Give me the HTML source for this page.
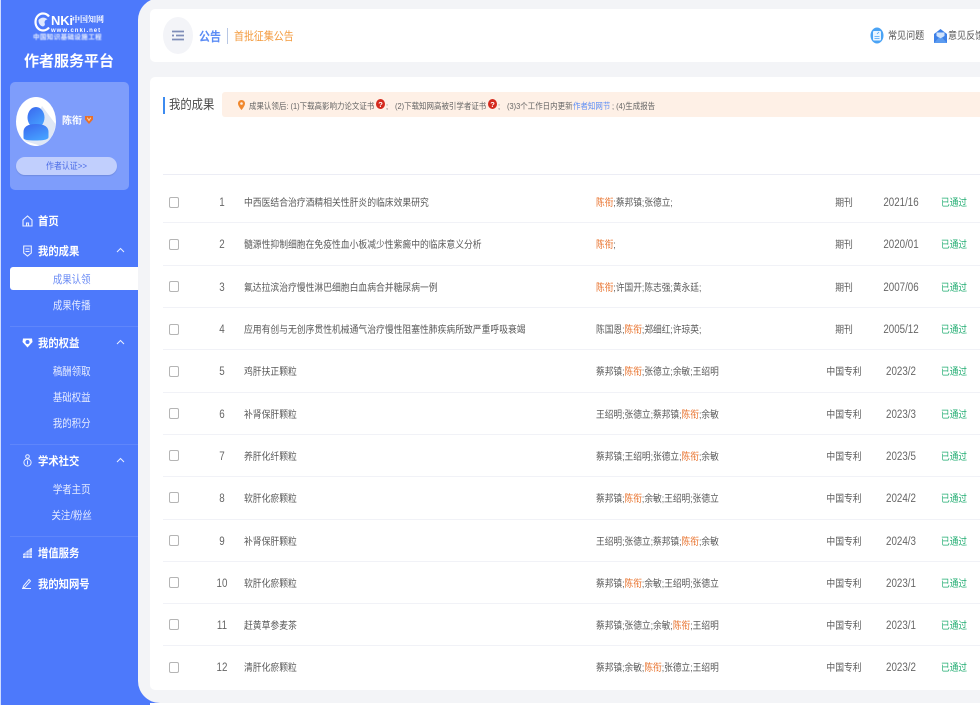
<!DOCTYPE html>
<html lang="zh"><head><meta charset="utf-8">
<style>
html,body{margin:0;padding:0;background:#fff}
#p{position:relative;width:980px;height:705px;overflow:hidden;background:#4d79fb;font-family:"Liberation Sans","Noto Sans CJK SC",sans-serif;color:#666}
#p div{position:absolute;white-space:nowrap}
.t{filter:blur(.3px)}
.m{left:38px;margin-top:1px;font-size:11.6px;line-height:14px;font-weight:700;color:#fff;transform:scaleX(.89);transform-origin:left center;filter:blur(.25px)}
.s{width:138px;left:0;margin-top:1px;text-align:center;font-size:10.6px;line-height:14px;padding-left:6px;box-sizing:border-box;color:#e6ecff;transform:scaleX(.89);filter:blur(.25px)}
.hr{left:10px;width:128px;height:1px;background:#5f86fb}
.cb{left:169px;width:8px;height:9px;border:1px solid #b5b5b5;border-radius:2px;background:#fff}
.n{left:202px;width:40px;text-align:center;font-size:11.5px;line-height:14px;color:#666;transform:scaleX(.85)}
.ti,.au,.ty,.st{font-size:10px;line-height:14px;color:#5a5a5a;margin-top:1px}
.ti{left:244px;transform:scaleX(.88);transform-origin:left center}
.au{left:596px;transform:scaleX(.87);transform-origin:left center}
.ty{left:814px;width:60px;text-align:center;transform:scaleX(.88)}
.yr{left:871px;width:60px;text-align:center;font-size:11.5px;line-height:14px;color:#666;transform:scaleX(.85)}
.st{left:941px;color:#22ad72;transform:scaleX(.87);transform-origin:left center}
.au b{font-weight:400;color:#e8702a}
.sep{left:163px;width:817px;height:1px;background:#f1f2f7}
.nt{top:98.500px;font-size:8.3px;line-height:14px;color:#666;transform:scaleX(.9);transform-origin:left center;filter:blur(.3px)}
</style></head><body>
<div id="p">
<div style="left:0;top:0;width:1px;height:705px;background:#cfdcff"></div>
<!-- main -->
<div style="left:138px;top:-2px;width:860px;height:705px;background:#f3f4f7;border-radius:22px 0 0 22px"></div>
<div style="left:150px;top:703px;width:830px;height:2px;background:#fff"></div>
<div style="left:150px;top:9px;width:830px;height:53px;background:#fff;border-radius:5px 0 0 5px"></div>
<div style="left:150px;top:77px;width:830px;height:613px;background:#fff;border-radius:5px 0 0 5px"></div>

<!-- logo -->
<svg style="position:absolute;left:34px;top:12px" width="18" height="20" viewBox="0 0 18 20"><path d="M15 4.500C13.500 2.500 11.500 1.500 9 1.500 4.800 1.500 1.500 5.300 1.500 10s3.300 8.500 7.500 8.500c2.500 0 4.500-1 6-3" fill="none" stroke="#fff" stroke-width="2.200"/><path d="M4.500 8c2.500-3 6.500-3 9-.5-2 .2-3 1.200-3 3.500 1 1.500 0 3-1.500 3.500C6 14 4.300 11 4.500 8z" fill="#dfe8ff"/></svg>
<div style="left:51px;top:13px;font-size:13px;line-height:15px;font-weight:700;color:#fff;letter-spacing:-.2px;filter:blur(.3px)">NKi</div>
<div style="left:72px;top:14px;font-size:8px;line-height:12px;color:#fff;font-weight:700;font-family:'Liberation Serif','Noto Serif CJK SC',serif;filter:blur(.3px)">中国知网</div>
<div style="left:51px;top:27px;font-size:6px;line-height:8px;color:#fff;font-weight:700;letter-spacing:1px;filter:blur(.3px)">www.cnki.net</div>
<div style="left:33px;top:34px;font-size:6.500px;line-height:8px;color:#eaf0ff;font-weight:700;letter-spacing:.4px;filter:blur(.4px)">中国知识基础设施工程</div>
<div style="left:24px;top:52px;font-size:15px;line-height:20px;font-weight:700;color:#fff;filter:blur(.2px)">作者服务平台</div>

<!-- profile card -->
<div style="left:10px;top:82px;width:119px;height:108px;background:#7e9dfb;border-radius:5px"></div>
<svg style="position:absolute;left:15px;top:97px" width="42" height="49" viewBox="0 0 42 49"><defs><linearGradient id="g" x1="0" y1="0" x2=".6" y2="1"><stop offset="0" stop-color="#3a67ee"/><stop offset="1" stop-color="#46a0ff"/></linearGradient></defs><ellipse cx="21" cy="24.500" rx="20" ry="24.500" fill="#fff"/><path d="M27 9L40.500 27c-1 12-8 20-16 21.500L10 44z" fill="#dfe7f5"/><ellipse cx="21" cy="20.500" rx="8.500" ry="10.500" fill="url(#g)"/><path d="M8.500 41v-6c0-5 4-8 12.500-8S33.500 30 33.500 35v5c0 2-3 3.500-12.500 3.500-8 0-12.500-.5-12.500-2.500z" fill="url(#g)"/></svg>
<div style="left:62px;top:115px;font-size:10px;line-height:14px;font-weight:700;color:#fff;filter:blur(.2px)">陈衔</div>
<svg style="position:absolute;left:85px;top:115px" width="8" height="9" viewBox="0 0 9 10"><path d="M0 1h9v4L4.500 10 0 5z" fill="#e8702a"/><path d="M2.500 3l2 3 2-3" fill="none" stroke="#f8d0a8" stroke-width="1.200"/></svg>
<div style="left:16px;top:157px;width:101px;height:18px;background:#c1cffd;border-radius:9px;box-shadow:0 1px 1px #6f8be0"></div>
<div style="left:16px;top:159px;width:101px;text-align:center;font-size:9px;line-height:14px;color:#4a6be6;transform:scaleX(.88);filter:blur(.2px)">作者认证&gt;&gt;</div>

<!-- menu -->
<svg style="position:absolute;left:22px;top:215px" width="11" height="12" viewBox="0 0 11 12" fill="none" stroke="#eaf0ff" stroke-width="1.100"><path d="M5.500 1L1 5v6h9V5zM4.500 11V8h2v3"/></svg>
<div class="m" style="top:214px">首页</div>
<svg style="position:absolute;left:23px;top:245px" width="9" height="12" viewBox="0 0 9 12" fill="none" stroke="#eaf0ff" stroke-width="1.100"><path d="M.7 1h7.600v7L4.500 11 .7 8z"/><path d="M2.500 4h4M2.500 6.500h4"/></svg>
<div class="m" style="top:244px">我的成果</div>
<svg style="position:absolute;left:116px;top:247px" width="9" height="6" viewBox="0 0 9 6" fill="none" stroke="#eaf0ff" stroke-width="1"><path d="M1 5l3.500-3.500L8 5"/></svg>
<div style="left:10px;top:267px;width:128px;height:23px;background:#fff;border-radius:3px 0 0 3px"></div>
<div class="s" style="top:272px;color:#6b8cf5">成果认领</div>
<div class="s" style="top:298px">成果传播</div>
<div class="hr" style="top:326px"></div>
<svg style="position:absolute;left:22px;top:337px" width="11" height="11" viewBox="0 0 11 11"><path d="M1 1.500h9l.5 3.500-5 5.500-5-5.500z" fill="#fff"/><circle cx="5.500" cy="5" r="2" fill="#4d79fb"/></svg>
<div class="m" style="top:336px">我的权益</div>
<svg style="position:absolute;left:116px;top:339px" width="9" height="6" viewBox="0 0 9 6" fill="none" stroke="#eaf0ff" stroke-width="1"><path d="M1 5l3.500-3.500L8 5"/></svg>
<div class="s" style="top:364px">稿酬领取</div>
<div class="s" style="top:390px">基础权益</div>
<div class="s" style="top:416px">我的积分</div>
<div class="hr" style="top:444px"></div>
<svg style="position:absolute;left:23px;top:454px" width="9" height="13" viewBox="0 0 9 13" fill="none" stroke="#eaf0ff" stroke-width="1"><circle cx="4.500" cy="2.500" r="1.800"/><circle cx="4.500" cy="8.500" r="3.600"/><path d="M4.500 6.500v4"/></svg>
<div class="m" style="top:454px">学术社交</div>
<svg style="position:absolute;left:116px;top:457px" width="9" height="6" viewBox="0 0 9 6" fill="none" stroke="#eaf0ff" stroke-width="1"><path d="M1 5l3.500-3.500L8 5"/></svg>
<div class="s" style="top:482px">学者主页</div>
<div class="s" style="top:508px">关注/粉丝</div>
<div class="hr" style="top:536px"></div>
<svg style="position:absolute;left:23px;top:547px" width="9" height="12" viewBox="0 0 9 12"><path d="M0 7l8-6h1v10H0z" fill="#d5dfff"/><path d="M0 8.500h9M0 6h9M3 4v7M6 2v9" stroke="#4d79fb" stroke-width=".5"/></svg>
<div class="m" style="top:546px">增值服务</div>
<svg style="position:absolute;left:22px;top:578px" width="10" height="11" viewBox="0 0 10 11" fill="none" stroke="#eaf0ff" stroke-width="1"><path d="M1.500 8L7 1.500l1.500 1.500L3 9.300 1 9.700zM0 10.500h9"/></svg>
<div class="m" style="top:577px">我的知网号</div>

<!-- top bar -->
<div style="left:163px;top:17px;width:30px;height:37px;background:#f3f4f8;border-radius:50%"></div>
<svg style="position:absolute;left:172px;top:30px" width="12" height="11" viewBox="0 0 12 11" fill="none" stroke="#7f8db8" stroke-width="1.800"><path d="M0 1.500h12M4 5.500h8M0 9.500h12"/><path d="M0 5.500h2"/></svg>
<div class="t" style="left:199px;top:29px;font-size:12.500px;line-height:16px;font-weight:700;color:#5b8cf5;transform:scaleX(.88);transform-origin:left center">公告</div>
<div style="left:227px;top:28px;width:1px;height:16px;background:#b8c7e4"></div>
<div class="t" style="left:234px;top:30px;font-size:11.300px;line-height:14px;color:#f39a3c;transform:scaleX(.88);transform-origin:left center">首批征集公告</div>
<svg style="position:absolute;left:870px;top:27px" width="14" height="17" viewBox="0 0 14 17"><ellipse cx="7" cy="8.500" rx="6.500" ry="8" fill="#4aa3f5"/><rect x="3" y="4" width="8" height="9.500" rx="1" fill="#eaf5ff"/><path d="M4.500 9.500h5M4.500 11.500h5M7 7l2-2" stroke="#4aa3f5" stroke-width=".8"/></svg>
<div class="t" style="left:888px;top:30px;font-size:10.300px;line-height:14px;color:#555;transform:scaleX(.88);transform-origin:left center">常见问题</div>
<svg style="position:absolute;left:934px;top:29px" width="13" height="14" viewBox="0 0 13 14"><path d="M6.500 0L13 5v9H0V5z" fill="#3d80e8"/><path d="M2.500 3.500h8V7L6.500 9.500 2.500 7z" fill="#cfe2fb"/><path d="M0 14l5-5.500 1.500 1 1.500-1 5 5.500z" fill="#5b9bf0"/></svg>
<div class="t" style="left:948px;top:30px;font-size:10.300px;line-height:14px;color:#555;transform:scaleX(.88);transform-origin:left center">意见反馈</div>

<!-- heading -->
<div style="left:163px;top:97px;width:2px;height:17px;background:#3d8bf0"></div>
<div class="t" style="left:169px;top:96px;font-size:12.900px;line-height:18px;color:#4a4a4a;transform:scaleX(.88);transform-origin:left center">我的成果</div>
<div style="left:222px;top:92px;width:758px;height:25px;background:#fef0e6;border-radius:3px 0 0 3px"></div>
<svg style="position:absolute;left:238px;top:100px" width="7" height="10" viewBox="0 0 7 10"><path d="M3.500 0C1.500 0 0 1.500 0 3.500 0 6 3.500 10 3.500 10S7 6 7 3.500C7 1.500 5.500 0 3.500 0z" fill="#f0882e"/><circle cx="3.500" cy="3.500" r="1.300" fill="#fef0e6"/></svg>
<div class="nt" style="left:249px">成果认领后: (1)下载高影响力论文证书</div>
<div class="nt" style="left:386px">;</div>
<div class="nt" style="left:395px">(2)下载知网高被引学者证书</div>
<div class="nt" style="left:498px">;</div>
<div class="nt" style="left:507px">(3)3个工作日内更新</div>
<div class="nt" style="left:573px;color:#5b8cf5">作者知网节</div>
<div class="nt" style="left:612px">; (4)生成报告</div>
<svg style="position:absolute;left:376px;top:99px" width="9" height="10" viewBox="0 0 9 10"><ellipse cx="4.500" cy="5" rx="4.500" ry="5" fill="#d42a1e"/><text x="4.500" y="7.800" text-anchor="middle" font-size="7.500" font-weight="700" fill="#fff" font-family="Liberation Sans">?</text></svg>
<svg style="position:absolute;left:488px;top:99px" width="9" height="10" viewBox="0 0 9 10"><ellipse cx="4.500" cy="5" rx="4.500" ry="5" fill="#d42a1e"/><text x="4.500" y="7.800" text-anchor="middle" font-size="7.500" font-weight="700" fill="#fff" font-family="Liberation Sans">?</text></svg>
<div style="left:163px;top:174px;width:817px;height:1px;background:#ecedf5"></div>

<!-- rows -->
<div style="left:0;top:1px;width:980px;height:705px;filter:blur(.35px)">
<div class="cb" style="top:196px"></div><div class="n" style="top:195px">1</div><div class="ti" style="top:195px">中西医结合治疗酒精相关性肝炎的临床效果研究</div><div class="au" style="top:195px"><b>陈衔</b>;蔡邦镇;张德立;</div><div class="ty" style="top:195px">期刊</div><div class="yr" style="top:195px">2021/16</div><div class="st" style="top:195px">已通过</div>
<div class="cb" style="top:238px"></div><div class="n" style="top:237px">2</div><div class="ti" style="top:237px">髓源性抑制细胞在免疫性血小板减少性紫癜中的临床意义分析</div><div class="au" style="top:237px"><b>陈衔</b>;</div><div class="ty" style="top:237px">期刊</div><div class="yr" style="top:237px">2020/01</div><div class="st" style="top:237px">已通过</div>
<div class="cb" style="top:280px"></div><div class="n" style="top:280px">3</div><div class="ti" style="top:280px">氟达拉滨治疗慢性淋巴细胞白血病合并糖尿病一例</div><div class="au" style="top:280px"><b>陈衔</b>;许国开;陈志强;黄永廷;</div><div class="ty" style="top:280px">期刊</div><div class="yr" style="top:280px">2007/06</div><div class="st" style="top:280px">已通过</div>
<div class="cb" style="top:323px"></div><div class="n" style="top:322px">4</div><div class="ti" style="top:322px">应用有创与无创序贯性机械通气治疗慢性阻塞性肺疾病所致严重呼吸衰竭</div><div class="au" style="top:322px">陈国恩;<b>陈衔</b>;郑细红;许琼英;</div><div class="ty" style="top:322px">期刊</div><div class="yr" style="top:322px">2005/12</div><div class="st" style="top:322px">已通过</div>
<div class="cb" style="top:365px"></div><div class="n" style="top:364px">5</div><div class="ti" style="top:364px">鸡肝扶正颗粒</div><div class="au" style="top:364px">蔡邦镇;<b>陈衔</b>;张德立;余敏;王绍明</div><div class="ty" style="top:364px">中国专利</div><div class="yr" style="top:364px">2023/2</div><div class="st" style="top:364px">已通过</div>
<div class="cb" style="top:407px"></div><div class="n" style="top:407px">6</div><div class="ti" style="top:407px">补肾保肝颗粒</div><div class="au" style="top:407px">王绍明;张德立;蔡邦镇;<b>陈衔</b>;余敏</div><div class="ty" style="top:407px">中国专利</div><div class="yr" style="top:407px">2023/3</div><div class="st" style="top:407px">已通过</div>
<div class="cb" style="top:449px"></div><div class="n" style="top:449px">7</div><div class="ti" style="top:449px">养肝化纤颗粒</div><div class="au" style="top:449px">蔡邦镇;王绍明;张德立;<b>陈衔</b>;余敏</div><div class="ty" style="top:449px">中国专利</div><div class="yr" style="top:449px">2023/5</div><div class="st" style="top:449px">已通过</div>
<div class="cb" style="top:491px"></div><div class="n" style="top:491px">8</div><div class="ti" style="top:491px">软肝化瘀颗粒</div><div class="au" style="top:491px">蔡邦镇;<b>陈衔</b>;余敏;王绍明;张德立</div><div class="ty" style="top:491px">中国专利</div><div class="yr" style="top:491px">2024/2</div><div class="st" style="top:491px">已通过</div>
<div class="cb" style="top:534px"></div><div class="n" style="top:534px">9</div><div class="ti" style="top:534px">补肾保肝颗粒</div><div class="au" style="top:534px">王绍明;张德立;蔡邦镇;<b>陈衔</b>;余敏</div><div class="ty" style="top:534px">中国专利</div><div class="yr" style="top:534px">2024/3</div><div class="st" style="top:534px">已通过</div>
<div class="cb" style="top:576px"></div><div class="n" style="top:576px">10</div><div class="ti" style="top:576px">软肝化瘀颗粒</div><div class="au" style="top:576px">蔡邦镇;<b>陈衔</b>;余敏;王绍明;张德立</div><div class="ty" style="top:576px">中国专利</div><div class="yr" style="top:576px">2023/1</div><div class="st" style="top:576px">已通过</div>
<div class="cb" style="top:618px"></div><div class="n" style="top:618px">11</div><div class="ti" style="top:618px">赶黄草参麦茶</div><div class="au" style="top:618px">蔡邦镇;张德立;余敏;<b>陈衔</b>;王绍明</div><div class="ty" style="top:618px">中国专利</div><div class="yr" style="top:618px">2023/1</div><div class="st" style="top:618px">已通过</div>
<div class="cb" style="top:661px"></div><div class="n" style="top:660px">12</div><div class="ti" style="top:660px">清肝化瘀颗粒</div><div class="au" style="top:660px">蔡邦镇;余敏;<b>陈衔</b>;张德立;王绍明</div><div class="ty" style="top:660px">中国专利</div><div class="yr" style="top:660px">2023/2</div><div class="st" style="top:660px">已通过</div>
</div>
<div class="sep" style="top:222px"></div><div class="sep" style="top:265px"></div><div class="sep" style="top:307px"></div><div class="sep" style="top:349px"></div><div class="sep" style="top:392px"></div><div class="sep" style="top:434px"></div><div class="sep" style="top:476px"></div><div class="sep" style="top:519px"></div><div class="sep" style="top:561px"></div><div class="sep" style="top:603px"></div><div class="sep" style="top:645px"></div>
</div>
</body></html>
